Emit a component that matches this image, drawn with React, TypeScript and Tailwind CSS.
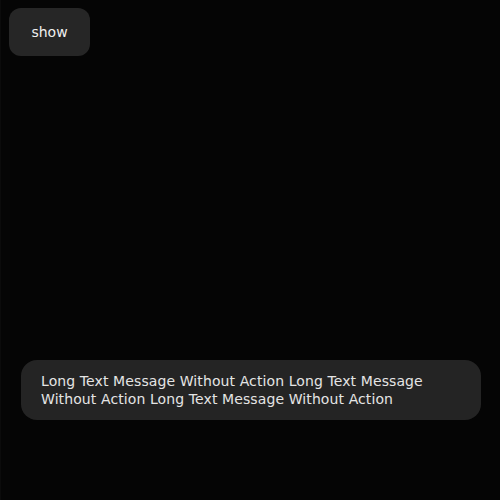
import React from 'react';

export default function App() {
  return (
    <div
      className="h-[500px] w-[500px] bg-[#050505] flex flex-col border-l border-[#0b0b0b]"
      style={{ fontFamily: '"DejaVu Sans", sans-serif' }}
    >
      <div className="pt-2 pl-2">
        <button className="w-[81px] h-[48px] rounded-xl bg-[#262626] text-[#f0f0f0] text-sm font-medium">
          show
        </button>
      </div>
      <div className="flex-1" />
      <div className="ml-5 mr-[19px] mb-[80px] rounded-2xl bg-[#242424] px-5 py-3">
        <p className="text-sm leading-[18px] tracking-[0.1px] text-[#e4e4e4]">
          Long Text Message Without Action Long Text Message Without Action Long Text Message Without Action
        </p>
      </div>
    </div>
  );
}
